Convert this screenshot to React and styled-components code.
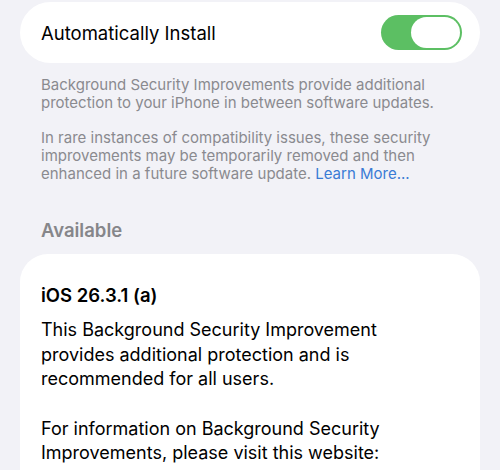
import React, { useState } from 'react';
import styled, { createGlobalStyle } from 'styled-components';

const GlobalStyle = createGlobalStyle`
  html, body {
    margin: 0;
    padding: 0;
    background: #f2f2f7;
  }
  body {
    font-family: Inter, "Noto Sans", "Liberation Sans", sans-serif;
    -webkit-font-smoothing: antialiased;
  }
`;

// Layout
const Page = styled.div`
  padding: 2px 20px 0;
`;

const SettingRow = styled.div`
  display: flex;
  align-items: center;
  justify-content: space-between;
  height: 61px;
  padding: 0 18px 0 21px;
  background: #ffffff;
  border-radius: 31px;
`;

const RowLabel = styled.span`
  font-size: 18.5px;
  color: #000000;
`;

const Switch = styled.button`
  display: flex;
  justify-content: ${(p) => (p.$on ? 'flex-end' : 'flex-start')};
  align-items: center;
  width: 81px;
  height: 35px;
  padding: 2px;
  border: none;
  border-radius: 18px;
  background: ${(p) => (p.$on ? '#5cbf63' : '#e3e3e8')};
  cursor: pointer;
`;

const Knob = styled.span`
  width: 49px;
  height: 31px;
  border-radius: 16px;
  background: #ffffff;
`;

const Footer = styled.div`
  padding: 13px 21px 0;
  font-size: 15px;
  line-height: 17.7px;
  color: #8a8a8f;
`;

const FooterPara = styled.p`
  margin: 0 0 17.7px;
  &:last-child {
    margin-bottom: 0;
  }
`;

const Link = styled.a`
  color: #3a7bd5;
  text-decoration: none;
`;

const SectionHeader = styled.h2`
  margin: 37px 0 13px;
  padding: 0 21px;
  font-size: 18.5px;
  line-height: 22px;
  font-weight: 600;
  color: #86868a;
`;

const UpdateCard = styled.div`
  background: #ffffff;
  border-radius: 28px 28px 0 0;
  padding: 30px 21px 40px;
`;

const UpdateTitle = styled.h3`
  margin: 0 0 12px;
  font-size: 18.5px;
  line-height: 22px;
  font-weight: 600;
  color: #000000;
`;

const Body = styled.p`
  max-width: 395px;
  margin: 0 0 24.6px;
  font-size: 18px;
  line-height: 24.6px;
  color: #000000;
`;

const App = () => {
  const [autoInstall, setAutoInstall] = useState(true);

  return (
    <>
      <GlobalStyle />
      <Page>
        <SettingRow>
          <RowLabel>Automatically Install</RowLabel>
          <Switch $on={autoInstall} onClick={() => setAutoInstall(!autoInstall)}>
            <Knob />
          </Switch>
        </SettingRow>
        <Footer>
          <FooterPara>
            Background Security Improvements provide additional protection to your iPhone in between software updates.
          </FooterPara>
          <FooterPara>
            In rare instances of compatibility issues, these security improvements may be temporarily removed and then
            enhanced in a future software update. <Link href="#">Learn More...</Link>
          </FooterPara>
        </Footer>
        <SectionHeader>Available</SectionHeader>
        <UpdateCard>
          <UpdateTitle>iOS 26.3.1 (a)</UpdateTitle>
          <Body>
            This Background Security Improvement provides additional protection and is recommended for all users.
          </Body>
          <Body>
            For information on Background Security Improvements, please visit this website:{' '}
            <Link href="#">https://support.apple.com/100100</Link>
          </Body>
        </UpdateCard>
      </Page>
    </>
  );
};

export default App;
